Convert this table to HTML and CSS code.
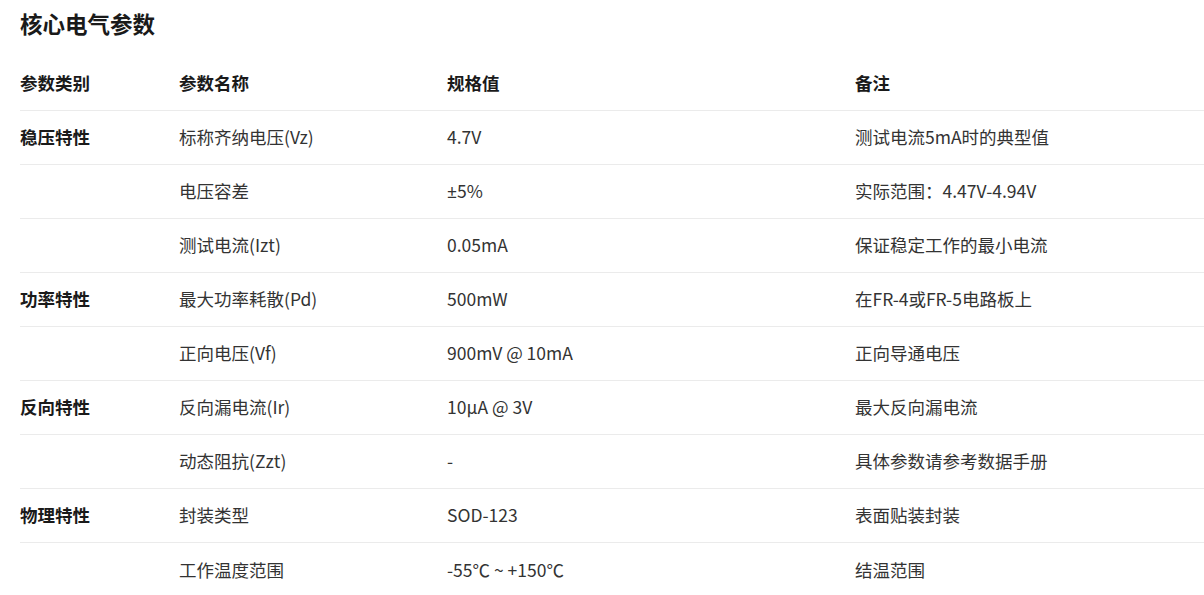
FILE: index.html
```html
<!DOCTYPE html>
<html lang="zh-CN">
<head>
<meta charset="utf-8">
<title>核心电气参数</title>
<link rel="stylesheet" href="styles.css">
</head>
<body>
<section class="panel">
  <h2 class="title">核心电气参数</h2>
  <div class="table">
    <div class="row head">
      <div class="cell">参数类别</div>
      <div class="cell">参数名称</div>
      <div class="cell">规格值</div>
      <div class="cell">备注</div>
    </div>
    <div class="row">
      <div class="cell cat">稳压特性</div>
      <div class="cell">标称齐纳电压(Vz)</div>
      <div class="cell">4.7V</div>
      <div class="cell">测试电流5mA时的典型值</div>
    </div>
    <div class="row">
      <div class="cell cat"></div>
      <div class="cell">电压容差</div>
      <div class="cell"><span class="latin">±</span>5%</div>
      <div class="cell">实际范围：4.47V-4.94V</div>
    </div>
    <div class="row">
      <div class="cell cat"></div>
      <div class="cell">测试电流(Izt)</div>
      <div class="cell">0.05mA</div>
      <div class="cell">保证稳定工作的最小电流</div>
    </div>
    <div class="row">
      <div class="cell cat">功率特性</div>
      <div class="cell">最大功率耗散(Pd)</div>
      <div class="cell">500mW</div>
      <div class="cell">在FR-4或FR-5电路板上</div>
    </div>
    <div class="row">
      <div class="cell cat"></div>
      <div class="cell">正向电压(Vf)</div>
      <div class="cell">900mV @ 10mA</div>
      <div class="cell">正向导通电压</div>
    </div>
    <div class="row">
      <div class="cell cat">反向特性</div>
      <div class="cell">反向漏电流(Ir)</div>
      <div class="cell">10μA @ 3V</div>
      <div class="cell">最大反向漏电流</div>
    </div>
    <div class="row">
      <div class="cell cat"></div>
      <div class="cell">动态阻抗(Zzt)</div>
      <div class="cell">-</div>
      <div class="cell">具体参数请参考数据手册</div>
    </div>
    <div class="row">
      <div class="cell cat">物理特性</div>
      <div class="cell">封装类型</div>
      <div class="cell">SOD-123</div>
      <div class="cell">表面贴装封装</div>
    </div>
    <div class="row">
      <div class="cell cat"></div>
      <div class="cell">工作温度范围</div>
      <div class="cell">-55℃ ~ +150℃</div>
      <div class="cell">结温范围</div>
    </div>
  </div>
</section>
</body>
</html>
```
FILE: styles.css
```css
* { box-sizing: border-box; }
html, body {
  margin: 0;
  padding: 0;
  background: #ffffff;
}
body {
  font-family: "Noto Sans CJK SC", "Noto Sans", sans-serif;
  color: #333333;
}
.panel {
  padding: 6px 0 0 20px;
}
.title {
  margin: 0 0 17px 0;
  font-size: 22.5px;
  line-height: 34px;
  font-weight: 700;
  color: #1a1a1a;
}
.table {
  display: flex;
  flex-direction: column;
}
.row {
  display: grid;
  grid-template-columns: 159px 268px 408px 1fr;
  height: 54px;
  align-items: center;
  border-bottom: 1px solid #ebebeb;
  font-size: 17.5px;
}
.row:last-child {
  border-bottom: none;
}
.cell {
  line-height: 24px;
  padding-bottom: 1px;
  white-space: nowrap;
}
.latin {
  font-family: "Noto Sans", sans-serif;
}
.head .cell,
.cat {
  font-weight: 700;
  color: #1a1a1a;
}
```
